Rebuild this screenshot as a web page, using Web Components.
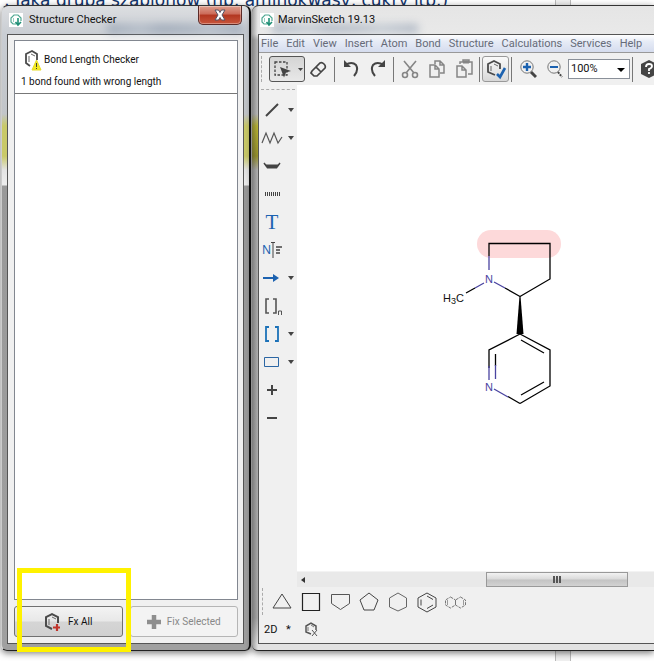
<!DOCTYPE html>
<html lang="en">
<head>
<meta charset="utf-8">
<title>MarvinSketch</title>
<style>
html, body { margin: 0; height: 100%; background: #fff; }
body { font: 11px/16px Roboto, sans-serif; color: #111; overflow: hidden; }
</style>
</head>
<body>
<desk-top></desk-top>
<script>
const s = (w, h, body) => `<svg width="${w}" height="${h}" viewBox="0 0 ${w} ${h}" fill="none" stroke="#444" aria-hidden="true">${body}</svg>`;
const icons = {
  app: s(14, 14, '<path d="M0 0h14v14H0z" fill="#fff" stroke="none"/><path d="M7 11H4L2 9V5l3-3h4l3 3v3" stroke="#4fa892" stroke-width="1.200"/><path d="M4.500 5v4" stroke="#9bd0c2"/><path d="M9 5v7M6.500 9 9 12l3-3" stroke="#1f8f76" stroke-width="1.600"/>'),
  warn: s(18, 22, '<g transform="translate(1 1)"><path d="M5 16 1 13V4l6-3 5 3v6" stroke="#4b4b4b" stroke-width="1.800"/><path d="M4 6v6M6 4l4 2" stroke="#666"/></g><path d="m12.500 11 4.500 10H8z" fill="#f4ea22" stroke="#e6dc28"/><path d="M12.500 14v4m0 1v1" stroke="#443"/>'),
  fix: s(18, 20, '<path d="M8 17 2 14V5l6-3 6 3v6" stroke="#4b4b4b" stroke-width="2"/><path d="M5 7v6M8 5l4 2" stroke="#666"/><path d="M13 12v7M9 15.500h7" stroke="#c0342b" stroke-width="2.200"/>'),
  plus: s(14, 16, '<path d="M7 1v14M0 8h14" stroke="#8e8e8e" stroke-width="4.500"/>'),
  select: s(32, 22, '<path d="M4 4h12v13H4z" stroke-dasharray="2.500 1.500" stroke-width="1.300"/><path d="m9 9 11 4-5 1.500-2 5z" fill="#444" stroke="none"/><path d="M27 10h5l-2.500 3z" fill="#444" stroke="none"/>'),
  eraser: s(18, 18, '<path d="m2 11 8-8q2-1 4 1t1 4l-8 8H4l-3-3zM6 7l5 5" stroke-width="1.700"/>'),
  undo: s(18, 18, '<path d="M3 5q7-4 11 0 3 5-2 11" stroke-width="2"/><path d="M2 0v7h7z" fill="#444" stroke="none"/>'),
  redo: s(18, 18, '<path d="M15 5Q8 1 4 5q-3 5 2 11" stroke-width="2"/><path d="M16 0v7H9z" fill="#444" stroke="none"/>'),
  cut: s(18, 20, '<g stroke="#858585" stroke-width="1.600"><path d="M3 2l10 12M15 2 5 14"/><circle cx="4" cy="16" r="2.500"/><circle cx="14" cy="16" r="2.500"/></g>'),
  copy: s(18, 20, '<g stroke="#858585" stroke-width="1.500"><path d="M7 5V2h5l4 4v8h-4M12 2v4h4"/><path d="M2 6h5l4 4v8H2zM7 6v4h4"/></g>'),
  paste: s(18, 20, '<g stroke="#858585" stroke-width="1.500"><path d="M2 7h5l4 4v7H2zM7 7v4h4"/><path d="M5 5V3h12v12h-4M8 3V1h6v3" /><path d="M8 3h6" stroke-width="3"/></g>'),
  check: s(22, 22, '<path d="M10 17 3 14V6l6-3 6 3v5" stroke="#4b4b4b" stroke-width="1.800"/><path d="M6 8v5M9 6l4 2" stroke="#666"/><path d="m12 16 3 3 5-9" stroke="#1c62b0" stroke-width="2.600"/>'),
  zin: s(18, 20, '<circle cx="8" cy="8" r="6.200" stroke="#777"/><path d="M8 4v8M4 8h8" stroke="#1c62b0" stroke-width="2.400"/><path d="m12 13 5 5" stroke-width="3"/>'),
  zout: s(18, 20, '<circle cx="8" cy="8" r="6.200" stroke="#777"/><path d="M4 8h8" stroke="#1c62b0" stroke-width="2"/><path d="m12 13 4 5" stroke-width="2" stroke-dasharray="2 1"/>'),
  help: s(18, 18, '<path d="m9 0 8 4v10l-8 4-8-4V4z" fill="#444" stroke="none"/><path d="M6 7q0-3 3-3t3 2q0 2-3 3v2m0 1v2" stroke="#fff" stroke-width="1.800"/>'),
  line: s(22, 20, '<path d="M5 16 17 4" stroke-width="2"/>'),
  chain: s(22, 20, '<path d="m1 15 4-10 4 10 4-10 4 10 4-6" stroke="#555" stroke-width="1.200"/>'),
  bold: s(22, 20, '<path d="m3 7 3 4M16 11l3-4" stroke-width="1.500"/><path d="M4 8.500h14l-2 4H6z" fill="#444" stroke="none"/>'),
  hatch: s(22, 20, '<path d="M4 10h15" stroke-width="4" stroke-dasharray="1 1"/>'),
  arrow: s(22, 20, '<path d="M2 10h12" stroke="#1c62b0" stroke-width="2"/><path d="m12 6 6 4-6 4z" fill="#1c62b0" stroke="none"/>'),
  rect: s(22, 20, '<path d="M3.500 5.500h14v9h-14z" stroke="#2b66a4"/>'),
  brackN: s(22, 20, '<path d="M8 3H5v14h3M12 3h3v14h-3" stroke="#555" stroke-width="1.600"/><path d="M17.500 19v-4h3v4" stroke="#555"/>'),
  brack: s(22, 20, '<path d="M8 3H5v14h3M14 3h3v14h-3" stroke="#1c72b8" stroke-width="1.800"/>'),
  add: s(22, 20, '<path d="M11 5v10M6 10h10" stroke-width="2"/>'),
  minus: s(22, 20, '<path d="M6 10h10" stroke-width="2"/>'),
  tri: s(24, 24, '<path d="m12 4 9 14H3z"/>'),
  square: s(24, 24, '<path d="M3.500 3.500h17v17h-17z" stroke="#222" stroke-width="1.200"/>'),
  house: s(24, 24, '<path d="M3.500 4.500h18v9l-9 6-9-6z" stroke="#555"/>'),
  pent: s(24, 24, '<path d="m12 3 9 7-4 10H7L3 10z"/>'),
  hexa: s(24, 24, '<path d="m12 3 8.500 5v9L12 21l-8.500-4V8z" stroke="#666"/>'),
  benz: s(24, 24, '<path d="m12 3 9 5v9l-9 5-9-5V8zM6 9.500v6M12 6l6 3.500M12 18.500l6-3.500"/>'),
  naph: s(24, 24, '<path d="m6.500 7 5 3v5l-5 3-5-3v-5zM16.500 7l5 3v5l-5 3-5-3v-5z" stroke="#777" stroke-dasharray="3 1"/><path d="M3.500 10v5M19.500 10v5" stroke="#999"/>'),
  hexx: s(16, 16, '<path d="M7 12 2 10V4l5-3 5 3v4" stroke="#555" stroke-width="1.500"/><path d="M4 5v4M7 3l3 2" stroke="#777"/><path d="m8 8 5 6M13 8l-5 6" stroke="#555"/>')
};

function define(name, markup) {
  customElements.define(name, class extends HTMLElement {
    connectedCallback() {
      if (this.shadowRoot) return;
      this.attachShadow({ mode: 'open' }).innerHTML =
        typeof markup === 'function' ? markup(this) : markup;
    }
  });
}

define('ui-icon', el => `<style>:host{display:inline-flex;flex:none}svg{display:block}</style>${icons[el.getAttribute('name')]}`);

define('tool-button', el => `<style>
:host{display:block;width:27px;height:26px;flex:none}
button{width:100%;height:100%;box-sizing:border-box;padding:0;border:1px solid transparent;border-radius:3px;background:none;display:flex;align-items:center;justify-content:center}
:host([wide]){width:36px}
:host([wide]) button{border-color:#555;background:linear-gradient(#d4d4d4,#e8e8e8)}
:host([framed]) button{border-color:#999;background:linear-gradient(#fafafa,#d8d8d8)}
</style><button type="button" aria-label="${el.getAttribute('label')}"><ui-icon name="${el.getAttribute('icon')}"></ui-icon></button>`);

define('side-tool', el => `<style>
:host{display:flex;height:28px;align-items:center}
button{height:100%;padding:0;border:0;background:none;display:flex;align-items:center;justify-content:center;font:12px/16px "Noto Sans",sans-serif;color:#1c62b0}
.main{width:26px}.more{width:13px}
i{border:3px solid transparent;border-top:4px solid #444;border-bottom:0}
</style><button class="main" type="button" aria-label="${el.getAttribute('label')}">${
  el.hasAttribute('icon') ? `<ui-icon name="${el.getAttribute('icon')}"></ui-icon>` : '<slot></slot>'
}</button>${el.hasAttribute('more') ? '<button class="more" type="button" aria-label="More"><i></i></button>' : ''}`);

define('app-window', el => `<style>
:host{display:flex;flex-direction:column;box-sizing:border-box;min-width:0;position:relative;
 border-top:1px solid #333;border-bottom:1px solid #222;border-radius:7px 7px 6px 6px;padding:0 6px 6px;
 box-shadow:0 2px 7px #0008}
:host([kind=tool]){border-right:2px solid #111;border-left:1px solid #ccc;padding:0 5px 6px;
 background:linear-gradient(#dcdee1,#c9cdd3 28px,#c2c5c9 108px,#c9c968 120px,#c9c968 150px,#e4e4e4 164px,#eee 179px,#999 180px,#a0a0a0)}
:host([kind=main]){padding-right:0;border-radius:7px 0 0 6px;
 background:linear-gradient(90deg,#3336,#0000 6px),linear-gradient(#e5e5e5,#e9e9e9 28px,#bbb 34px,#bbb 108px,#b9b432 120px,#99942a 150px,#b0b0b0 164px,#aaa 95%,#e2e2e2 99%)}
header{height:28px;flex:none;display:flex;align-items:center;gap:6px;padding-left:2px;font-size:11px;position:relative}
:host([kind=main]) header{gap:4px}
b{font-weight:400;white-space:nowrap}
.smear{position:absolute;left:100px;width:136px;bottom:1px;height:9px;background:linear-gradient(90deg,#5c7290,#8fa0b5 25%,#5c7290 40%,#71849d 60%,#8fa0b5 75%,#5c7290);opacity:.4;filter:blur(4px)}
:host([kind=main]) .smear{left:14px;width:146px}
.close{position:absolute;right:2px;top:0;width:44px;height:19px;box-sizing:border-box;border:1px solid #5b2a27;border-top:0;border-radius:0 0 5px 5px;padding:0;
 background:linear-gradient(#dda08f,#cb6a58 45%,#b23620 50%,#c8563c);box-shadow:inset 0 0 0 1px #fff5;display:flex;align-items:center;justify-content:center}
header ui-icon,b{position:relative}
.in{flex:1;min-height:0;display:flex;flex-direction:column;background:#f0f0f0;border:1px solid #555}
:host([kind=main]) .in{border-right:0}
</style>
<header><span class="smear"></span><ui-icon name="app"></ui-icon><b>${el.getAttribute('caption')}</b>${
 el.getAttribute('kind') === 'tool' ? '<button class="close" type="button" aria-label="Close"><svg width="12" height="12" viewBox="0 0 12 12" fill="#fff" stroke="#556" aria-hidden="true"><path d="M1 1h3.500L6 3.500 7.500 1H11L8 6l3 5H7.500L6 8.500 4.500 11H1l3-5z"/></svg></button>' : ''}</header>
<div class="in"><slot></slot></div>`);

define('checker-panel', `<style>
:host{flex:1;display:flex;flex-direction:column;gap:6px;padding:5px 5px 6px 6px;font-size:10px}
.list{flex:1;border:1px solid #828790;background:#fff}
.item{border-bottom:1px solid #777;padding:7px 6px 2px;height:43px}
.head{display:flex;align-items:center;gap:2px;padding-left:3px;height:24px}
p{margin:0;line-height:20px}
.acts{display:flex;gap:7px}
button{flex:1;height:31px;border:1px solid #707070;border-radius:3px;background:linear-gradient(#f3f3f3,#e8e8e8 48%,#d5d5d5 52%,#d0d0d0);font:inherit;color:#111;display:flex;align-items:center;justify-content:center;gap:6px;padding:0}
button:disabled{border-color:#b5b5b5;background:#f3f3f3;color:#888}
</style>
<div class="list"><div class="item"><div class="head"><ui-icon name="warn"></ui-icon><span>Bond Length Checker</span></div><p>1 bond found with wrong length</p></div></div>
<div class="acts"><button type="button"><ui-icon name="fix"></ui-icon>Fx All</button><button type="button" disabled><ui-icon name="plus"></ui-icon>Fix Selected</button></div>`);

define('menu-bar', `<style>
:host{display:flex;flex:none;height:18px;gap:8px;padding-left:2px;box-sizing:border-box;background:linear-gradient(#fff,#e6ebf6 40%,#d5dcee);border-bottom:1px solid #999}
button{border:0;padding:0;background:none;font:11px/17px Roboto,sans-serif;color:#666b78}
</style>${['File', 'Edit', 'View', 'Insert', 'Atom', 'Bond', 'Structure', 'Calculations', 'Services', 'Help'].map(t => `<button type="button">${t}</button>`).join('')}`);

define('main-toolbar', `<style>
:host{display:flex;flex:none;height:32px;align-items:center;overflow:hidden}
.grip{width:0;height:26px;border-left:1px dashed #aaa;margin:0 7px 0 2px;flex:none}
hr{width:1px;height:25px;border:0;margin:0 2px;background:#777;flex:none}
label{position:relative;display:flex;flex:none;width:62px}
select{appearance:none;width:100%;height:20px;border:1px solid #8a9099;border-radius:0;background:#fff;padding:0 2px;font:11px/16px Roboto,sans-serif;color:#111}
i{position:absolute;right:5px;top:9px;border:4px solid transparent;border-top:4px solid #000;border-bottom:0;pointer-events:none}
</style><span class="grip"></span>
<tool-button wide icon="select" label="Select"></tool-button><tool-button icon="eraser" label="Erase"></tool-button><hr>
<tool-button icon="undo" label="Undo"></tool-button><tool-button icon="redo" label="Redo"></tool-button><hr>
<tool-button icon="cut" label="Cut"></tool-button><tool-button icon="copy" label="Copy"></tool-button><tool-button icon="paste" label="Paste"></tool-button><hr>
<tool-button framed icon="check" label="Check structure"></tool-button><hr>
<tool-button icon="zin" label="Zoom in"></tool-button><tool-button icon="zout" label="Zoom out"></tool-button>
<label><select aria-label="Zoom"><option>100%</option></select><i></i></label><hr>
<tool-button icon="help" label="Help"></tool-button>`);

define('side-bar', `<style>
:host{display:block;width:38px;flex:none}
.grip{border-top:1px dashed #aaa;margin:4px 2px 6px}
.t{font:21px/24px "Liberation Serif",serif}
.n{display:flex;align-items:center}
</style><div class="grip"></div>
<side-tool icon="line" label="Bond" more></side-tool><side-tool icon="chain" label="Chain" more></side-tool>
<side-tool icon="bold" label="Bold bond"></side-tool><side-tool icon="hatch" label="Hashed bond"></side-tool>
<side-tool label="Text"><span class="t">T</span></side-tool>
<side-tool label="Name"><span class="n">N<svg width="11" height="16" viewBox="0 0 11 16" fill="none" stroke="#444" aria-hidden="true"><path d="M0 .5h4M2 1v15"/><path d="M5 5h6M5 8h4M5 11h4" stroke-width="1.500"/></svg></span></side-tool>
<side-tool icon="arrow" label="Reaction arrow" more></side-tool><side-tool icon="brackN" label="Repeating group"></side-tool>
<side-tool icon="brack" label="Brackets" more></side-tool><side-tool icon="rect" label="Rectangle" more></side-tool>
<side-tool icon="add" label="Increase charge"></side-tool><side-tool icon="minus" label="Decrease charge"></side-tool>`);

define('sketch-canvas', `<style>
:host{flex:1;min-width:0;display:flex;flex-direction:column}
.paper{flex:1;background:#fff;position:relative;overflow:hidden}
.paper svg{position:absolute;left:143px;top:140px}
text{font-family:"Liberation Sans",sans-serif;stroke:none;fill:#111}
.bar{height:16px;flex:none;display:grid;grid-template-columns:15px 174px 142px 1fr;align-items:center;background:#e9e9e9;border-top:1px solid #f3f3f3;box-sizing:border-box}
.bar button{border:0;background:none;padding:0 0 0 4px;height:14px;display:flex;align-items:center}
.bar i{border:3px solid transparent;border-right:4px solid #333;border-left:0}
.thumb{grid-column:3;height:15px;box-sizing:border-box;border:1px solid #999;background:linear-gradient(#f2f2f2,#dadada 48%,#c3c3c3 52%,#d2d2d2);display:flex;gap:1px;justify-content:center;align-items:center}
.thumb b{width:2px;height:7px;background:#555}
</style><div class="paper"><svg width="130" height="190" viewBox="440 225 130 190" fill="none" stroke="#000" stroke-width="1.300" role="img" aria-label="Nicotine">
<rect x="477" y="230" width="84" height="28" rx="14" fill="#fdd9da" stroke="none"/>
<path d="M489 256V243.500h61V279l-30 17.500M505 288l15 8.500M466 293l9-5M520 334l30 16v36l-30 17.500M520 334l-31 16v18M521 340l23 13M521 395l23-13M495.500 354v12M520 403.500l-12-7"/>
<path d="M489 256v14M494 282l11 6M475 288l9-5M489 366v14M495.500 365v14M494 389l14 8" stroke="#4a44a0"/>
<path d="M519.500 296h1l3 38h-7z" fill="#000" stroke="none"/>
<text x="443" y="302" font-size="11">H<tspan font-size="9" dy="2">3</tspan><tspan dy="-2">C</tspan></text>
<text x="485" y="283" font-size="11" style="fill:#4a44a0">N</text><text x="485" y="391" font-size="11" style="fill:#4a44a0">N</text>
</svg></div>
<div class="bar"><button type="button" aria-label="Scroll left"><i></i></button><div class="thumb"><b></b><b></b><b></b></div></div>`);

define('template-bar', `<style>
:host{display:block;flex:none}
.row{display:flex;height:29px;align-items:center}
.grip{width:0;height:27px;border-left:1px dashed #aaa;margin:0 4px 0 3px}
tool-button{width:29px}
.status{display:flex;height:27px;align-items:center;padding-left:5px}
button{border:0;background:none;padding:0;font:11px/16px Roboto,sans-serif;text-align:left;width:22px;color:#111}
.x{width:18px}
</style><div class="row"><span class="grip"></span>${[['tri', 'Cyclopropane'], ['square', 'Cyclobutane'], ['house', 'Cyclopentane, reversed'], ['pent', 'Cyclopentane'], ['hexa', 'Cyclohexane'], ['benz', 'Benzene'], ['naph', 'Naphthalene']].map(a => `<tool-button icon="${a[0]}" label="${a[1]}"></tool-button>`).join('')}</div>
<div class="status"><button type="button">2D</button><button class="x" type="button">*</button><ui-icon name="hexx"></ui-icon></div>`);

define('desk-top', `<style>
:host{display:grid;grid-template-columns:250px 1fr;gap:1px;position:relative;box-sizing:border-box;height:100vh;margin-right:7px;padding:5px 0 10px 1px;overflow:hidden;background:#fff}
.doc{position:absolute;left:4px;top:-10px;font:17px/20px "DejaVu Sans",sans-serif;color:#12346c;white-space:nowrap}
.ruler{position:absolute;left:555px;width:14px;top:0;bottom:0;border:solid #bbb;border-width:0 1px;background:#f0f0f0}
.work{display:flex;flex:1;min-height:0}
.mark{position:absolute;left:17px;bottom:9px;width:104px;height:74px;border:5px solid #fff200;pointer-events:none}
</style>
<span class="doc">: Jaka grupa szablonów (np. aminokwasy, cukry itp.)</span><span class="ruler"></span>
<app-window kind="tool" caption="Structure Checker"><checker-panel></checker-panel></app-window>
<app-window kind="main" caption="MarvinSketch 19.13"><menu-bar></menu-bar><main-toolbar></main-toolbar><div class="work"><side-bar></side-bar><sketch-canvas></sketch-canvas></div><template-bar></template-bar></app-window>
<span class="mark"></span>`);
</script>
</body>
</html>
